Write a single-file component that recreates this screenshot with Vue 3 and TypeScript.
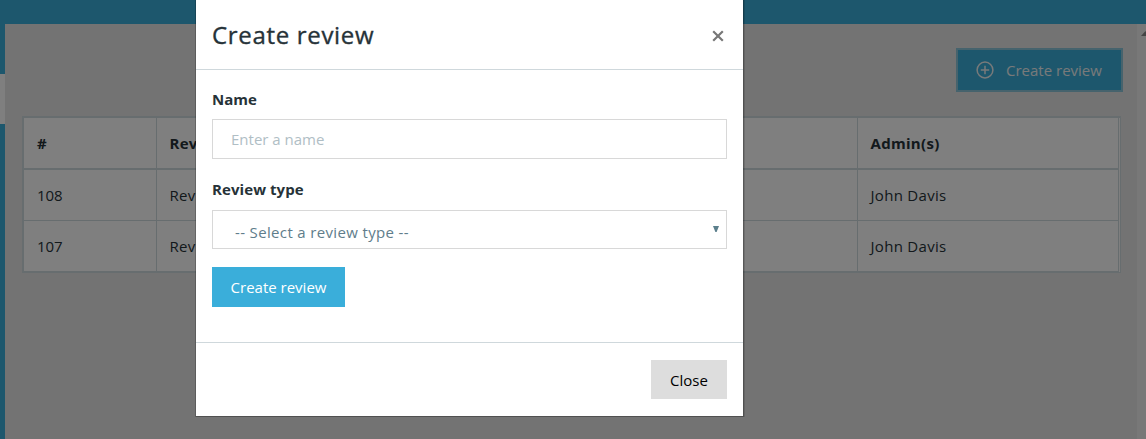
<script setup lang="ts">
import { ref } from 'vue'

interface Review {
  id: number
  name: string
  admin: string
}

const reviews: Review[] = [
  { id: 108, name: 'Rev', admin: 'John Davis' },
  { id: 107, name: 'Rev', admin: 'John Davis' },
]
const reviewName = ref('')
</script>

<template>
  <div class="page">
    <header class="topbar"></header>
    <div class="body">
      <nav class="rail"><div class="rail-active"></div></nav>
      <main class="content">
        <div class="toolbar">
          <button class="create">
            <svg width="18" height="18" viewBox="0 0 18 18" fill="none" stroke="currentColor">
              <circle cx="9" cy="9" r="7.9" stroke-width="1.5" />
              <path d="M9 4.8v8.4M4.8 9h8.4" stroke-width="1.5" />
            </svg>
            <span>Create review</span>
          </button>
        </div>
        <div class="table">
          <div class="row head">
            <div class="cell">#</div>
            <div class="cell">Rev</div>
            <div class="cell">Admin(s)</div>
          </div>
          <div v-for="r in reviews" :key="r.id" class="row">
            <div class="cell id">{{ r.id }}</div>
            <div class="cell">{{ r.name }}</div>
            <div class="cell">{{ r.admin }}</div>
          </div>
        </div>
      </main>
      <div class="scrollbar">
        <svg width="9" height="5" viewBox="0 0 9 5"><path d="M4.5 0L9 5H0z" fill="#888" /></svg>
      </div>
    </div>
    <div class="overlay"></div>
    <section class="modal" role="dialog">
      <div class="modal-head">
        <h2>Create review</h2>
        <svg width="12" height="12" viewBox="0 0 12 12">
          <path d="M1.2 1.2l9.6 9.6M10.8 1.2l-9.6 9.6" stroke="#777" stroke-width="2.2" />
        </svg>
      </div>
      <div class="modal-body">
        <label>Name</label>
        <input v-model="reviewName" class="field" placeholder="Enter a name" />
        <label class="second">Review type</label>
        <div class="field select">
          <span>-- Select a review type --</span>
          <svg width="6" height="6" viewBox="0 0 6 6"><path d="M0 0h6L3.6 6H2.4z" fill="#5b7f8c" /></svg>
        </div>
        <button class="submit">Create review</button>
      </div>
      <div class="modal-foot"><button class="close">Close</button></div>
    </section>
  </div>
</template>

<style>
body {
  overflow: hidden;
}
</style>

<style scoped>
* {
  box-sizing: border-box;
}
.page {
  position: relative;
  width: 1146px;
  height: 439px;
  overflow: hidden;
  font: 15px/22px 'Open Sans', 'Noto Sans', sans-serif;
  color: #263238;
  background: #e6e6e6;
}
button,
input {
  font: inherit;
  letter-spacing: inherit;
  border: 0;
  border-radius: 0;
  padding: 0;
  margin: 0;
}
.topbar {
  height: 24px;
  background: #3aaeda;
}
.body {
  display: flex;
  height: 415px;
}
.rail {
  width: 5px;
  padding-top: 50px;
  background: #3aaeda;
}
.rail-active {
  height: 50px;
  background: #fff;
}
.content {
  flex: 1;
  padding: 24px 14px 0 17px;
}
.toolbar {
  display: flex;
  justify-content: flex-end;
}
.create {
  display: flex;
  align-items: center;
  width: 167px;
  height: 44px;
  padding-left: 18px;
  gap: 12px;
  border: 2px solid #8cc6da;
  background: #3aaeda;
  color: #f0f4f5;
}
.table {
  width: 1099px;
  margin-top: 24px;
  border: solid #cfdadf;
  border-width: 2px 1px 1px 2px;
  padding-right: 1px;
  background: #fff;
}
.row {
  display: grid;
  grid-template-columns: 133px 701px 261px;
  height: 51px;
  border-bottom: 1px solid #cfdadf;
  letter-spacing: 0.3px;
}
.head {
  height: 52px;
  border-bottom-width: 2px;
  font-weight: 700;
}
.cell {
  display: flex;
  align-items: center;
  padding-left: 13px;
  padding-bottom: 1px;
  border-right: 1px solid #cfdadf;
}
.cell + .cell {
  padding-left: 12.5px;
}
.id {
  letter-spacing: -0.1px;
}
.scrollbar {
  width: 9px;
  padding: 7px 0 0 4px;
  background: #f1f1f1;
  overflow: hidden;
}
.scrollbar svg {
  display: block;
}
.overlay {
  position: absolute;
  inset: 0;
  background: rgba(0, 0, 0, 0.5);
}
.modal {
  position: absolute;
  left: 196px;
  top: 0;
  width: 547px;
  height: 416px;
  background: #fff;
  box-shadow: 0 0 0 1px rgba(0, 0, 0, 0.2), 1px 0 0 1px rgba(0, 0, 0, 0.12);
}
.modal-head {
  display: flex;
  justify-content: space-between;
  align-items: center;
  height: 70px;
  padding: 2px 19px 0 16px;
  border-bottom: 1px solid #cfd8dc;
}
h2 {
  margin: -1px 0 0;
  font-size: 24px;
  line-height: 32px;
  font-weight: 500;
  letter-spacing: 0.68px;
  -webkit-text-stroke: 0.35px currentColor;
}
.modal-body {
  height: 272px;
  padding: 18px 16px 0;
}
label {
  display: block;
  height: 23px;
  margin-bottom: 8px;
  font-weight: 700;
  line-height: 23px;
}
.second {
  margin-top: 19px;
  margin-bottom: 9px;
  letter-spacing: 0.08px;
}
.field {
  display: block;
  width: 515px;
  height: 40px;
  padding: 0 18px 1px;
  border: 1px solid #d8d8d8;
  background: #fff;
}
.field::placeholder {
  color: #b0bec5;
  opacity: 1;
}
.select {
  display: flex;
  justify-content: space-between;
  height: 39px;
  padding: 10px 7px 0 22px;
  color: #607d8b;
  letter-spacing: 0.35px;
}
.select svg {
  margin-top: 5px;
}
.submit {
  width: 133px;
  height: 40px;
  margin-top: 18px;
  background: #3aaeda;
  color: #fff;
}
.modal-foot {
  display: flex;
  justify-content: flex-end;
  padding: 17px 16px;
  border-top: 1px solid #cfd8dc;
}
.close {
  width: 76px;
  height: 39px;
  background: #ddd;
  color: #000;
}
</style>
